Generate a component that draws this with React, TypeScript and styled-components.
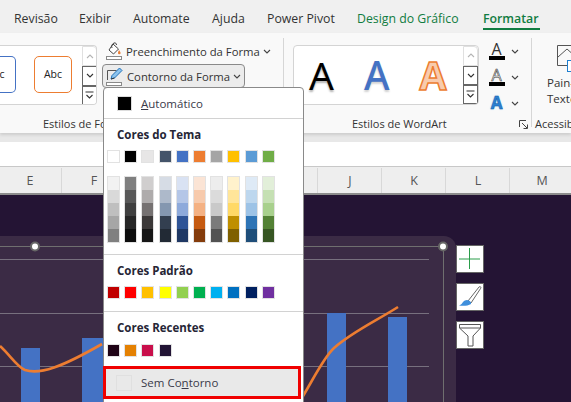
import styled, { createGlobalStyle } from "styled-components";

const GlobalStyle = createGlobalStyle`
  html, body {
    margin: 0;
    padding: 0;
    background: #241434;
  }
  body {
    font-family: "Open Sans", "Noto Sans", sans-serif;
    color: #262626;
  }
`;

const tabs = [
  { label: "Revisão", width: 65 },
  { label: "Exibir", width: 54 },
  { label: "Automate", width: 79 },
  { label: "Ajuda", width: 55 },
  { label: "Power Pivot", width: 90 },
  { label: "Design do Gráfico", width: 126, green: true },
  { label: "Formatar", width: 60, green: true, active: true },
];

const columns = ["E", "F", "", "", "", "J", "K", "L", "M"];

const baseColors = ["#ffffff", "#000000", "#e7e6e6", "#44546a", "#4472c4", "#ed7d31", "#a5a5a5", "#ffc000", "#5b9bd5", "#70ad47"];

const ramps = [
  ["#f2f2f2", "#d9d9d9", "#bfbfbf", "#a6a6a6", "#808080"],
  ["#7f7f7f", "#595959", "#404040", "#262626", "#0d0d0d"],
  ["#d0cece", "#aeabab", "#757171", "#3b3838", "#161616"],
  ["#d6dce5", "#adb9ca", "#8497b0", "#333f50", "#222a35"],
  ["#d9e2f3", "#b4c6e7", "#8eaadb", "#2f5496", "#1f3864"],
  ["#fbe4d5", "#f7caac", "#f4b183", "#c55a11", "#843c0c"],
  ["#ededed", "#dbdbdb", "#c9c9c9", "#7b7b7b", "#525252"],
  ["#fff2cc", "#ffe599", "#ffd966", "#bf8f00", "#7f6000"],
  ["#deeaf6", "#bdd7ee", "#9dc3e6", "#2e74b5", "#1f4e79"],
  ["#e2efd9", "#c5e0b3", "#a8d08d", "#538135", "#375623"],
];

const standardColors = ["#c00000", "#ff0000", "#ffc000", "#ffff00", "#92d050", "#00b050", "#00b0f0", "#0070c0", "#002060", "#7030a0"];
const recentColors = ["#1f0316", "#e48103", "#c90f4b", "#221435"];

function Chevron({ color = "#444" }: { color?: string }) {
  return (
    <svg width="8" height="5" viewBox="0 0 8 5" fill="none">
      <path d="M1 1l3 3 3-3" stroke={color} strokeWidth="1.1" />
    </svg>
  );
}

function ScrollButtons() {
  return (
    <ScrollColumn>
      <ScrollButton $faded>
        <svg width="8" height="5" viewBox="0 0 8 5" fill="none">
          <path d="M1 4l3-3 3 3" stroke="#b5b5b5" strokeWidth="1.1" />
        </svg>
      </ScrollButton>
      <ScrollButton>
        <Chevron color="#333" />
      </ScrollButton>
      <ScrollButton>
        <svg width="9" height="8" viewBox="0 0 9 8" fill="none">
          <path d="M0.5 1h8M1.5 4l3 3 3-3" stroke="#333" strokeWidth="1.1" />
        </svg>
      </ScrollButton>
    </ScrollColumn>
  );
}

function BucketIcon() {
  return (
    <svg width="17" height="18" viewBox="0 0 17 18" fill="none">
      <path d="M7 2l5.500 5-5 5-4.500-4z" fill="#fff" stroke="#444" strokeWidth="1" />
      <path d="M6 6c-.8-2 0-4 2-5 1.500-.6 2.500.6 2.500 2" stroke="#444" strokeWidth="1" />
      <path d="M13 8c1 1.400 1.600 2.200 1.600 3a1.300 1.300 0 0 1-2.600 0c0-.8.400-1.600 1-3z" fill="#ed7d31" />
      <rect x="0.500" y="14.500" width="15" height="3" fill="#fff" stroke="#8a8a8a" />
    </svg>
  );
}

function PenIcon() {
  return (
    <svg width="18" height="19" viewBox="0 0 18 19" fill="none">
      <path d="M1.500 13V3.500h9" stroke="#555" strokeWidth="1" />
      <path d="M5 12l1-3.500L13.500 1 16 3.500 8.500 11z" fill="#8cc4ee" stroke="#1e6fb8" strokeWidth="1" />
      <path d="M5 12l3.500-1" stroke="#333" strokeWidth="1" />
      <rect x="0.500" y="15.500" width="15" height="3" fill="#fff" stroke="#8a8a8a" />
    </svg>
  );
}

function PaneIcon() {
  return (
    <svg width="24" height="28" viewBox="0 0 24 28" fill="none">
      <path d="M0.500 0.500H24M0.500 0.500V20.500H10" stroke="#555" />
      <path d="M1 12l9-8 9 8" stroke="#555" />
      <rect x="10.500" y="15.500" width="14" height="11" fill="#fff" stroke="#1e7fd0" />
    </svg>
  );
}

function LauncherIcon() {
  return (
    <svg width="9" height="9" viewBox="0 0 9 9" fill="none">
      <path d="M0.500 7V0.500H7M3 3l5 5M4.500 8.500h4v-4" stroke="#444" />
    </svg>
  );
}

function PlusIcon() {
  return (
    <svg width="22" height="22" viewBox="0 0 22 22" fill="none">
      <path d="M0 11h21M10.500 0v21" stroke="#2a9d4a" strokeWidth="1" />
    </svg>
  );
}

function BrushIcon() {
  return (
    <svg width="24" height="25" viewBox="0 0 24 25" fill="none">
      <path d="M10 16L21 2c1-1 2.400 0 1.700 1.300L13 18z" fill="#fff" stroke="#666" strokeWidth="1" />
      <path d="M9 15c3 .5 4.500 2 4 4-3 2-8 2-12 1.500 2.500-.8 3-2.300 4-3.500 1-1.300 2.500-2 4-2z" fill="#3f8fdc" />
    </svg>
  );
}

function FunnelIcon() {
  return (
    <svg width="24" height="24" viewBox="0 0 24 24" fill="none">
      <path d="M1.500 1.500h21v3.500l-7.500 8V23h-5V13L1.500 5z" fill="#fff" stroke="#555" strokeWidth="1" />
      <path d="M1.500 5h21" stroke="#555" strokeWidth="1" />
    </svg>
  );
}

function ChartDrawing() {
  return (
    <svg width="456" height="166" viewBox="0 0 456 166" fill="none">
      <g stroke="#77707e" strokeWidth="1">
        <path d="M0 23.500h429M0 77.500h429M0 130.500h429" />
      </g>
      <g stroke="#6f6f6f" strokeWidth="1">
        <path d="M0 10.500h443M443.500 10v156" />
      </g>
      <g fill="#4472c4">
        <rect x="21" y="112" width="19" height="54" />
        <rect x="82" y="102" width="30" height="64" />
        <rect x="327" y="77" width="19" height="89" />
        <rect x="388" y="81" width="19" height="85" />
      </g>
      <path
        d="M0 110C10 119 17 131 25 134C40 139 62 131 102 108M300 165C312 146 323 122 334 112C352 96 376 85 398 71"
        stroke="#ed7d31"
        strokeWidth="2.600"
      />
      <circle cx="35" cy="10.500" r="4" fill="#fff" stroke="#666" strokeWidth="2" />
      <circle cx="443" cy="10.500" r="4" fill="#fff" stroke="#666" strokeWidth="2" />
    </svg>
  );
}

export default function App() {
  return (
    <>
      <GlobalStyle />
      <Page>
        <TabBar>
          {tabs.map((tab) => (
            <Tab key={tab.label} $width={tab.width} $green={tab.green} $active={tab.active}>
              {tab.label}
            </Tab>
          ))}
        </TabBar>

        <Ribbon>
          <ShapeGroup>
            <GroupBody>
              <ShapeGallery>
                <ShapeSample $color="#4472c4" $cut>
                  bc
                </ShapeSample>
                <ShapeSample $color="#ed7d31">Abc</ShapeSample>
                <ScrollButtons />
              </ShapeGallery>
              <ShapeCommands>
                <ShapeCommand>
                  <BucketIcon />
                  Preenchimento da Forma
                  <Chevron />
                </ShapeCommand>
                <ShapeCommand $open>
                  <PenIcon />
                  Contorno da Forma
                  <Chevron />
                </ShapeCommand>
              </ShapeCommands>
            </GroupBody>
            <ShapeLabel>Estilos de Forma</ShapeLabel>
          </ShapeGroup>

          <WordArtGroup>
            <GroupBody>
              <WordArtGallery>
                <WordArtLetters>
                  <BlackLetter>A</BlackLetter>
                  <BlueLetter>A</BlueLetter>
                  <OrangeLetter>A</OrangeLetter>
                </WordArtLetters>
                <ScrollButtons />
              </WordArtGallery>
              <TextTools>
                <TextTool>
                  <ToolGlyph>
                    <ToolLetter>A</ToolLetter>
                    <ToolBar />
                  </ToolGlyph>
                  <Chevron />
                </TextTool>
                <TextTool>
                  <ToolGlyph>
                    <ToolLetter $outlined>A</ToolLetter>
                    <ToolBar />
                  </ToolGlyph>
                  <Chevron />
                </TextTool>
                <TextTool>
                  <ToolGlyph>
                    <EffectLetter>A</EffectLetter>
                  </ToolGlyph>
                  <Chevron />
                </TextTool>
              </TextTools>
            </GroupBody>
            <WordArtLabel>
              Estilos de WordArt
              <LauncherIcon />
            </WordArtLabel>
          </WordArtGroup>

          <AccessGroup>
            <PaneButton>
              <PaneIcon />
              <PaneText>Pain-</PaneText>
              <PaneText>Texto</PaneText>
            </PaneButton>
            <AccessLabel>Acessibilidade</AccessLabel>
          </AccessGroup>
        </Ribbon>

        <RibbonGap />
        <FormulaBar />

        <ColumnHeader>
          {columns.map((column, index) => (
            <ColumnCell key={index}>{column}</ColumnCell>
          ))}
        </ColumnHeader>

        <Sheet>
          <ChartFrame>
            <ChartDrawing />
          </ChartFrame>
          <ChartButtons>
            <ChartButton>
              <PlusIcon />
            </ChartButton>
            <ChartButton>
              <BrushIcon />
            </ChartButton>
            <ChartButton>
              <FunnelIcon />
            </ChartButton>
          </ChartButtons>
        </Sheet>

        <Menu>
          <AutoRow>
            <AutoSwatch />
            <span>
              <u>A</u>utomático
            </span>
          </AutoRow>
          <MenuSection $height={136}>
            <SectionTitle>Cores do Tema</SectionTitle>
            <SwatchRow>
              {baseColors.map((color) => (
                <Swatch key={color} $color={color} />
              ))}
            </SwatchRow>
            <RampRow>
              {ramps.map((ramp) => (
                <Ramp key={ramp[0]}>
                  {ramp.map((color) => (
                    <RampStep key={color} $color={color} />
                  ))}
                </Ramp>
              ))}
            </RampRow>
          </MenuSection>
          <MenuSection $height={57}>
            <SectionTitle>Cores Padrão</SectionTitle>
            <SwatchRow>
              {standardColors.map((color) => (
                <Swatch key={color} $color={color} />
              ))}
            </SwatchRow>
          </MenuSection>
          <RecentSection>
            <SectionTitle>Cores Recentes</SectionTitle>
            <RecentRow>
              {recentColors.map((color) => (
                <Swatch key={color} $color={color} />
              ))}
            </RecentRow>
          </RecentSection>
          <NoOutlineRow>
            <NoOutlineSwatch />
            <span>
              Sem Co<u>n</u>torno
            </span>
          </NoOutlineRow>
        </Menu>
      </Page>
    </>
  );
}

const Page = styled.div`
  position: relative;
  width: 571px;
  height: 402px;
  overflow: hidden;
  display: flex;
  flex-direction: column;
  background: #241434;
`;

const TabBar = styled.div`
  height: 33px;
  flex: none;
  box-sizing: border-box;
  padding-left: 14px;
  display: flex;
  background: #f0f0f0;
`;

const Tab = styled.div<{ $width: number; $green?: boolean; $active?: boolean }>`
  width: ${(p) => p.$width}px;
  flex: none;
  height: 30px;
  line-height: 37px;
  font-size: 12.300px;
  white-space: nowrap;
  color: ${(p) => (p.$green ? "#107c41" : "#333")};
  font-weight: ${(p) => (p.$active ? 600 : 400)};
  position: relative;

  &::after {
    content: "";
    display: ${(p) => (p.$active ? "block" : "none")};
    position: absolute;
    left: 0;
    right: 3px;
    top: 28px;
    height: 2px;
    background: #107c41;
  }
`;

const Ribbon = styled.div`
  height: 100px;
  flex: none;
  display: flex;
  background: #f9f9f9;
  box-shadow: 0 2px 3px rgba(0, 0, 0, 0.12);
  z-index: 1;
  overflow: hidden;
`;

const ShapeGroup = styled.div`
  width: 284px;
  flex: none;
  display: flex;
  flex-direction: column;
  position: relative;

  &::after {
    content: "";
    position: absolute;
    right: 0;
    top: 5px;
    bottom: 6px;
    width: 1px;
    background: #d6d6d6;
  }
`;

const GroupBody = styled.div`
  height: 77px;
  flex: none;
  display: flex;
`;

const ShapeGallery = styled.div`
  width: 97px;
  height: 60px;
  margin-top: 12px;
  flex: none;
  box-sizing: border-box;
  border: 1px solid #d4d4d4;
  border-left: none;
  border-radius: 0 4px 4px 0;
  background: #fff;
  display: flex;
  align-items: flex-start;
  overflow: hidden;
`;

const ShapeSample = styled.div<{ $color: string; $cut?: boolean }>`
  width: ${(p) => (p.$cut ? "16px" : "38px")};
  height: 37px;
  margin-top: 10px;
  margin-right: ${(p) => (p.$cut ? "18px" : "10px")};
  flex: none;
  box-sizing: border-box;
  border: 1px solid ${(p) => p.$color};
  border-left-width: ${(p) => (p.$cut ? 0 : 1)}px;
  border-radius: ${(p) => (p.$cut ? "0 5px 5px 0" : "5px")};
  display: flex;
  align-items: center;
  justify-content: ${(p) => (p.$cut ? "flex-start" : "center")};
  text-indent: ${(p) => (p.$cut ? "-7px" : "0")};
  font-size: 10.500px;
  color: #222;
  background: #fff;
  padding-bottom: 2px;
  overflow: hidden;
`;

const ScrollColumn = styled.div`
  width: 15px;
  flex: none;
  display: flex;
  flex-direction: column;
  margin-left: auto;
`;

const ScrollButton = styled.div<{ $faded?: boolean }>`
  height: ${(p) => (p.$faded ? 20 : 19.500)}px;
  box-sizing: border-box;
  display: flex;
  align-items: center;
  justify-content: center;
  background: #fff;
  border: 1px solid ${(p) => (p.$faded ? "#e0e0e0" : "#666")};
  border-radius: ${(p) => (p.$faded ? "0 4px 0 0" : "0")};
`;

const ShapeCommands = styled.div`
  margin-left: 5px;
  padding-top: 6px;
  display: flex;
  flex-direction: column;
  gap: 1px;
`;

const ShapeCommand = styled.div<{ $open?: boolean }>`
  height: 24px;
  box-sizing: border-box;
  padding: 0 3px;
  display: flex;
  align-items: center;
  gap: 3px;
  font-size: 11.300px;
  white-space: nowrap;
  color: #333;
  width: fit-content;
  border: 1px solid ${(p) => (p.$open ? "#8a8a8a" : "transparent")};
  border-radius: 4px;
  background: ${(p) => (p.$open ? "#ececec" : "transparent")};
`;

const ShapeLabel = styled.div`
  padding-left: 43px;
  font-size: 11px;
  line-height: 16px;
  margin-top: 6px;
  color: #333;
`;

const WordArtGroup = styled.div`
  width: 248px;
  flex: none;
  display: flex;
  flex-direction: column;
  position: relative;

  &::after {
    content: "";
    position: absolute;
    right: 0;
    top: 5px;
    bottom: 6px;
    width: 1px;
    background: #d6d6d6;
  }
`;

const WordArtGallery = styled.div`
  width: 186px;
  height: 60px;
  margin: 12px 0 0 9px;
  flex: none;
  box-sizing: border-box;
  border: 1px solid #d4d4d4;
  border-radius: 4px;
  background: #fff;
  display: flex;
  overflow: hidden;
`;

const WordArtLetters = styled.div`
  flex: 1;
  padding-left: 15px;
  display: flex;
  gap: 30px;
  align-items: center;
  font-family: "Noto Sans", sans-serif;
  font-size: 39px;
  line-height: 58px;
`;

const BlackLetter = styled.span`
  color: #000;
  font-weight: 400;
  text-shadow: 0 2px 2px rgba(0, 0, 0, 0.3);
`;

const BlueLetter = styled.span`
  color: #4472c4;
  font-weight: 500;
  text-shadow: 0 2px 2px rgba(0, 0, 0, 0.18);
`;

const OrangeLetter = styled.span`
  color: #f8cbad;
  font-weight: 700;
  -webkit-text-stroke: 1.500px #ed7d31;
`;

const TextTools = styled.div`
  margin-left: 9px;
  padding-top: 6px;
  display: flex;
  flex-direction: column;
  gap: 2px;
`;

const TextTool = styled.div`
  height: 24px;
  display: flex;
  align-items: center;
  gap: 6px;
`;

const ToolGlyph = styled.div`
  width: 17px;
  height: 24px;
  display: flex;
  flex-direction: column;
  align-items: center;
  justify-content: center;
`;

const ToolLetter = styled.span<{ $outlined?: boolean }>`
  font-size: 16px;
  line-height: 14px;
  color: ${(p) => (p.$outlined ? "#e4e4e4" : "#333")};
  -webkit-text-stroke: ${(p) => (p.$outlined ? "0.600px #444" : "0")};
`;

const ToolBar = styled.div`
  width: 16px;
  height: 4px;
  flex: none;
  background: #000;
`;

const EffectLetter = styled.span`
  font-size: 17px;
  line-height: 20px;
  font-weight: 700;
  color: #2e7fd0;
  -webkit-text-stroke: 0.500px #0f5ea8;
  text-shadow: 0 0 2px #9fd0f5;
`;

const WordArtLabel = styled.div`
  padding-left: 68px;
  font-size: 11px;
  line-height: 16px;
  margin-top: 6px;
  color: #333;
  display: flex;
  align-items: center;

  svg {
    margin-left: 72px;
  }
`;

const AccessGroup = styled.div`
  flex: 1;
  min-width: 0;
  display: flex;
  flex-direction: column;
`;

const PaneButton = styled.div`
  height: 77px;
  padding: 12px 0 0 15px;
  box-sizing: border-box;
  display: flex;
  flex-direction: column;
  font-size: 11.500px;
  line-height: 16px;
  white-space: nowrap;
  color: #333;

  svg {
    margin: 0 0 2px 10px;
    flex: none;
  }
`;

const PaneText = styled.span`
  display: block;
`;

const AccessLabel = styled.div`
  padding-left: 3px;
  font-size: 11px;
  line-height: 16px;
  margin-top: 6px;
  white-space: nowrap;
  color: #333;
`;

const RibbonGap = styled.div`
  height: 9px;
  flex: none;
  background: #e8e8e8;
`;

const FormulaBar = styled.div`
  height: 24px;
  flex: none;
  background: #fff;
  border-bottom: 1px solid #c8c8c8;
`;

const ColumnHeader = styled.div`
  height: 28px;
  flex: none;
  box-sizing: border-box;
  margin-left: -2px;
  display: flex;
  background: #eeeeee;
  border-bottom: 2px solid #8c8c8c;
`;

const ColumnCell = styled.div`
  width: 64px;
  flex: none;
  box-sizing: border-box;
  display: flex;
  align-items: center;
  justify-content: center;
  font-size: 12.500px;
  color: #555;
  position: relative;

  &::after {
    content: "";
    position: absolute;
    right: 0;
    top: 1px;
    bottom: 0;
    width: 1px;
    background: #d8d8d8;
  }
`;

const Sheet = styled.div`
  flex: 1;
  min-height: 0;
  padding-top: 41px;
  display: flex;
  align-items: flex-start;
  background: #241434;
`;

const ChartFrame = styled.div`
  width: 456px;
  height: 166px;
  flex: none;
  background: #3b2b45;
  border-radius: 0 12px 0 0;

  svg {
    display: block;
  }
`;

const ChartButtons = styled.div`
  padding-top: 9px;
  display: flex;
  flex-direction: column;
  gap: 10px;
`;

const ChartButton = styled.div`
  width: 28px;
  height: 28px;
  box-sizing: border-box;
  display: flex;
  align-items: center;
  justify-content: center;
  background: #fff;
  border: 1px solid #666;
`;

const Menu = styled.div`
  position: absolute;
  left: 103px;
  top: 87px;
  width: 201px;
  height: 330px;
  box-sizing: border-box;
  border: 1px solid #8a8a8a;
  border-radius: 4px;
  background: #fff;
  z-index: 2;
  font-size: 11px;
  color: #333;
`;

const AutoRow = styled.div`
  height: 30px;
  box-sizing: border-box;
  padding-left: 13px;
  display: flex;
  align-items: center;
  gap: 9px;
  font-size: 11.500px;
  color: #3a3a4a;
`;

const AutoSwatch = styled.div`
  width: 15px;
  height: 15px;
  box-sizing: border-box;
  background: #000;
  border: 1px solid #ddd;
`;

const MenuSection = styled.div<{ $height: number }>`
  height: ${(p) => p.$height}px;
  box-sizing: border-box;
  border-top: 1px solid #d2d2d2;
  padding: 7px 0 0 3px;
`;

const RecentSection = styled.div`
  height: 55px;
  box-sizing: border-box;
  border-top: 1px solid #d2d2d2;
  padding: 7px 0 0 3px;
`;

const SectionTitle = styled.div`
  height: 17px;
  padding-left: 10px;
  font-size: 11.500px;
  line-height: 17px;
  font-weight: 700;
  color: #262636;
`;

const SwatchRow = styled.div`
  margin-top: 7px;
  display: flex;
  gap: 4.200px;
`;

const RecentRow = styled(SwatchRow)`
  margin-top: 8px;
`;

const Swatch = styled.div<{ $color: string }>`
  width: 13px;
  height: 13px;
  flex: none;
  box-sizing: border-box;
  background: ${(p) => p.$color};
  border: 1px solid #e2e2e2;
`;

const RampRow = styled.div`
  margin-top: 13px;
  display: flex;
  gap: 4.200px;
`;

const Ramp = styled.div`
  width: 13px;
  flex: none;
  box-sizing: border-box;
  border: 1px solid #e2e2e2;
`;

const RampStep = styled.div<{ $color: string }>`
  height: 13px;
  background: ${(p) => p.$color};
`;

const NoOutlineRow = styled.div`
  width: 198px;
  height: 33px;
  margin-left: -1px;
  box-sizing: border-box;
  border: 3px solid #f00000;
  background: #e9e9e9;
  padding-left: 10px;
  display: flex;
  align-items: center;
  gap: 9px;
  font-size: 11.500px;
  color: #3a3a4a;
`;

const NoOutlineSwatch = styled.div`
  width: 16px;
  height: 16px;
  flex: none;
  box-sizing: border-box;
  border: 1px solid #e0e0e0;
`;
